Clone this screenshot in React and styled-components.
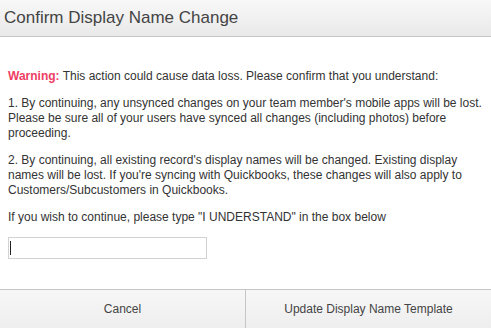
import styled, { createGlobalStyle } from "styled-components"

const Global = createGlobalStyle`
    html, body {
        margin: 0;
        padding: 0;
        background: #ffffff;
    }
    body {
        font-family: "Liberation Sans", Arial, sans-serif;
    }
`;

const Modal = styled.div`
    width: 491px;
    height: 328px;
    display: flex;
    flex-direction: column;
    background: #ffffff;
    overflow: hidden;
`;

const Header = styled.header`
    height: 36px;
    flex-shrink: 0;
    display: flex;
    align-items: center;
    padding: 0 4px;
    background: linear-gradient(180deg, #f8f8f8, #e9e9e9);
    border-bottom: 1px solid #c6c6c6;

    h3{
        margin: 0;
        font-size: 17px;
        font-weight: 400;
        color: #444444;
    }
`;

const Body = styled.section`
    flex: 1;
    padding: 32px 8px 0 8px;
    font-size: 12px;
    line-height: 15px;
    color: #333333;

    p{
        margin: 0 0 12px 0;
    }
`;

const Warn = styled.strong`
    color: #ee3d63;
    font-weight: 700;
`;

const Caret = styled.span`
    display: block;
    width: 1px;
    height: 14px;
    margin-left: 1px;
    background: #222;
`;

const FakeInput = styled.div`
    box-sizing: border-box;
    width: 199px;
    height: 22px;
    margin-top: 3px;
    border: 1px solid #d2d2d2;
    display: flex;
    align-items: center;
`;

const Footer = styled.footer`
    height: 38px;
    flex-shrink: 0;
    display: flex;
    border-top: 1px solid #c6c6c6;
`;

const Button = styled.button`
    flex: 1;
    border: none;
    border-left: ${(p) => (p.$divider ? "1px solid #c6c6c6" : "none")};
    background: linear-gradient(180deg, #f7f7f7, #eeeeee);
    font-family: "Liberation Sans", Arial, sans-serif;
    font-size: 12px;
    color: #444444;
    padding: 0;
    cursor: pointer;
`;

export default function App() {
    return (
        <>
            <Global />
            <Modal>
                <Header>
                    <h3>Confirm Display Name Change</h3>
                </Header>
                <Body>
                    <p><Warn>Warning:</Warn> This action could cause data loss. Please confirm that you understand:</p>
                    <p>1. By continuing, any unsynced changes on your team member's mobile apps will be lost. Please be sure all of your users have synced all changes (including photos) before proceeding.</p>
                    <p>2. By continuing, all existing record's display names will be changed. Existing display names will be lost. If you're syncing with Quickbooks, these changes will also apply to Customers/Subcustomers in Quickbooks.</p>
                    <p>If you wish to continue, please type "I UNDERSTAND" in the box below</p>
                    <FakeInput>
                        <Caret />
                    </FakeInput>
                </Body>
                <Footer>
                    <Button>Cancel</Button>
                    <Button $divider>Update Display Name Template</Button>
                </Footer>
            </Modal>
        </>
    )
}
